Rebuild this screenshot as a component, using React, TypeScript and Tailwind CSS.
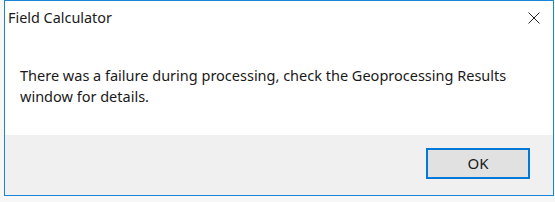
export default function App() {
  return (
    <div className="w-[555px] h-[202px] bg-[#f7f7f7] pl-[4px]" style={{ fontFamily: '"Noto Sans", "Open Sans", sans-serif' }}>
      <div className="w-[550px] h-[196px] border border-[#1a85d8] bg-white flex flex-col">
        <div className="h-[34px] flex items-center justify-between pl-[3px] pr-[13px]">
          <span className="text-[14.4px] text-[#1a1a1a] leading-[20px]">Field Calculator</span>
          <svg width="12" height="12" viewBox="0 0 12 12">
            <path d="M0.5 0.5 L11.5 11.5 M11.5 0.5 L0.5 11.5" stroke="#222" strokeWidth="1" />
          </svg>
        </div>
        <div className="flex-1 pl-[15px] pt-[30px] text-[14.5px] leading-[21px] text-[#1a1a1a]">
          There was a failure during processing, check the Geoprocessing Results
          <br />
          window for details.
        </div>
        <div className="h-[60px] bg-[#f0f0f0] flex justify-end items-start pt-[13px] pr-[23px]">
          <button className="w-[104px] h-[31px] border-2 border-[#0078d7] bg-[#e1e1e1] text-[15px] text-[#1a1a1a] flex items-center justify-center">
            OK
          </button>
        </div>
      </div>
    </div>
  );
}
